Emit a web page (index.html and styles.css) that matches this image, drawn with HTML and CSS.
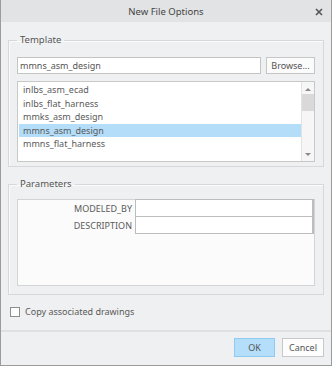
FILE: index.html
```html
<!DOCTYPE html>
<html lang="en">
<head>
    <meta charset="UTF-8">
    <title>New File Options</title>
    <link rel="stylesheet" href="styles.css">
</head>
<body>

<div class="dialog">
    <div class="titlebar">
        <span class="title">New File Options</span>
        <svg class="close" width="8" height="8" viewBox="0 0 8 8">
            <path d="M1 1L7 7M7 1L1 7" stroke="#555" stroke-width="1.6"/>
        </svg>
    </div>

    <fieldset class="group template">
        <legend>Template</legend>
        <div class="template-row">
            <input type="text" class="template-input" value="mmns_asm_design">
            <button class="btn browse">Browse...</button>
        </div>
        <div class="listbox">
            <ul class="items">
                <li>inlbs_asm_ecad</li>
                <li>inlbs_flat_harness</li>
                <li>mmks_asm_design</li>
                <li class="selected">mmns_asm_design</li>
                <li>mmns_flat_harness</li>
            </ul>
            <div class="scrollbar">
                <span class="arrow up"></span>
                <span class="track"><span class="thumb"></span></span>
                <span class="arrow down"></span>
            </div>
        </div>
    </fieldset>

    <fieldset class="group parameters">
        <legend>Parameters</legend>
        <div class="param-table">
            <div class="param-label">MODELED_BY</div>
            <div class="param-value"></div>
            <div class="param-label">DESCRIPTION</div>
            <div class="param-value"></div>
        </div>
    </fieldset>

    <label class="copy-row">
        <span class="checkbox"></span>
        Copy associated drawings
    </label>

    <div class="footer">
        <button class="btn ok">OK</button>
        <button class="btn cancel">Cancel</button>
    </div>
</div>

</body>
</html>
```

FILE: styles.css
```css
body {
    margin: 0;
    font-family: 'Noto Sans', 'Open Sans', sans-serif;
    font-size: 9px;
    color: #555;
    background: #fff;
}
.dialog {
    width: 332px;
    height: 366px;
    box-sizing: border-box;
    background: #eff0f1;
    border: 1px solid #9c9c9c;
    border-top: none;
    display: flex;
    flex-direction: column;
}
.titlebar {
    height: 22px;
    background: #e2e3e4;
    display: flex;
    align-items: center;
    justify-content: center;
    position: relative;
}
.title {
    font-size: 9.5px;
    color: #444;
}
.close {
    position: absolute;
    right: 8px;
    top: 8px;
}
.group {
    margin: 0 7px;
    border: 1px solid #d6d8da;
    box-shadow: inset 1px 1px 0 #fafafa;
    min-width: 0;
}
.group legend {
    font-size: 9.5px;
    line-height: 14px;
    padding: 0 3px;
    color: #555;
}
.template {
    margin-top: 11px;
    padding: 10px 8px 4px 8px;
}
.template-row {
    display: flex;
    gap: 5px;
    margin-bottom: 7px;
}
.template-input {
    flex: 1;
    height: 17px;
    box-sizing: border-box;
    border: 1px solid #c4c4c4;
    background: #fff;
    font-family: inherit;
    font-size: 9px;
    color: #555;
    padding: 0 2px;
    margin: 0;
    outline: none;
}
.btn {
    font-family: inherit;
    font-size: 9px;
    color: #555;
    box-sizing: border-box;
    margin: 0;
    padding: 0;
    cursor: pointer;
}
.browse {
    width: 49px;
    height: 17px;
    border: 1px solid #c6c6c6;
    background: #fbfbfb;
}
.listbox {
    height: 81px;
    box-sizing: border-box;
    border: 1px solid #c8c8c8;
    background: #fff;
    display: flex;
}
.items {
    list-style-type: none;
    margin: 0;
    padding: 1px 0 0 1px;
    flex: 1;
}
.items li {
    height: 13.5px;
    line-height: 13.5px;
    padding-left: 4px;
    color: #5a5a5a;
}
.items li.selected {
    background: #b3ddf8;
}
.scrollbar {
    width: 12px;
    background: #f6f6f6;
    border-left: 1px solid #e2e2e2;
    display: flex;
    flex-direction: column;
}
.arrow {
    height: 10px;
    display: flex;
    align-items: center;
    justify-content: center;
}
.arrow.up {
    margin-top: 2px;
}
.arrow.down {
    margin-bottom: 2px;
}
.arrow::after {
    content: '';
    border-left: 3px solid transparent;
    border-right: 3px solid transparent;
}
.arrow.up::after {
    border-bottom: 3px solid #8a8a8a;
}
.arrow.down::after {
    border-top: 3px solid #8a8a8a;
}
.track {
    flex: 1;
    display: flex;
    flex-direction: column;
}
.thumb {
    height: 17px;
    background: #d9d9d9;
}
.parameters {
    margin-top: 10px;
    padding: 8px 8px 8px 8px;
}
.param-table {
    height: 87px;
    box-sizing: border-box;
    border: 1px solid #d4d4d4;
    background: #fbfbfb;
    display: grid;
    grid-template-columns: 117px 1fr;
    grid-auto-rows: max-content;
}
.param-label {
    height: 17px;
    line-height: 17px;
    text-align: right;
    padding-right: 3px;
    color: #5a5a5a;
}
.param-value {
    height: 18px;
    box-sizing: border-box;
    border: 1px solid #bdbdbd;
    border-right-width: 2px;
    background: #fff;
    margin-top: -1px;
}
.copy-row {
    display: flex;
    align-items: center;
    gap: 5px;
    height: 13px;
    margin: 10px 0 0 9px;
    font-size: 9px;
    color: #5a5a5a;
}
.checkbox {
    width: 10px;
    height: 10px;
    box-sizing: border-box;
    border: 1px solid #8e8e8e;
    background: #fdfdfd;
}
.footer {
    margin-top: 12px;
    border-top: 2px solid #dfe0e1;
    display: flex;
    justify-content: flex-end;
    gap: 7px;
    padding: 6px 7px 0 0;
}
.ok {
    width: 41px;
    height: 19px;
    border: 1px solid #8ecbf3;
    background: #b4defa;
}
.cancel {
    width: 42px;
    height: 19px;
    border: 1px solid #c8c8c8;
    background: #fdfdfd;
}
```
